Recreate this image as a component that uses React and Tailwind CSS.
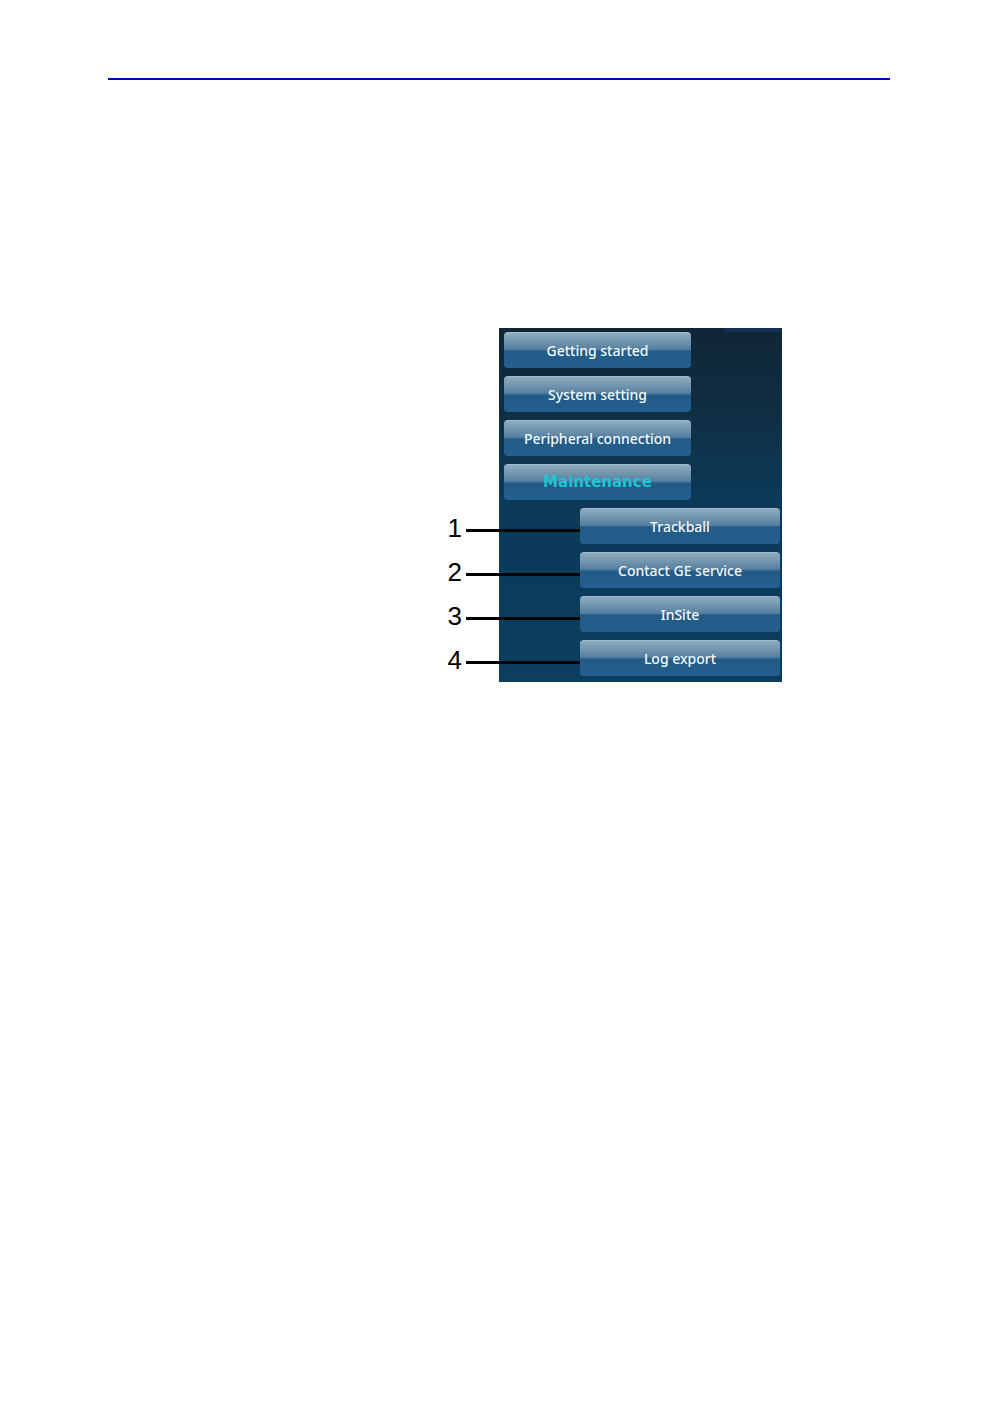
import React from "react";
import clsx from "clsx";

const sections = [
  { name: "Getting started" },
  { name: "System setting" },
  { name: "Peripheral connection" },
  { name: "Maintenance", active: true },
];

const maintenanceItems = ["Trackball", "Contact GE service", "InSite", "Log export"];

const MenuButton = ({ active, children }) => (
  <button
    type="button"
    className={clsx(
      "flex h-9 w-full items-center justify-center rounded border-t border-[#a0b9cb] whitespace-nowrap",
      "bg-[linear-gradient(to_bottom,#90acc0_0%,#56809f_46%,#235b85_52%,#235f8e_100%)]",
      active
        ? "font-['DejaVu_Sans',sans-serif] text-[15px] font-bold text-[#1cc5d2]"
        : "font-['Noto_Sans',sans-serif] text-sm font-medium text-[#f4f9fd]"
    )}
  >
    {children}
  </button>
);

// Number and leader line that point at a menu entry
const Callout = ({ number }) => (
  <div className="absolute right-full top-1 flex h-9 items-center gap-1">
    <span className="pb-1 font-['Liberation_Sans',sans-serif] text-[26px] leading-8 text-black">{number}</span>
    <span className="h-[3px] w-[114px] bg-black" />
  </div>
);

const App = () => {
  return (
    <div className="min-h-screen bg-white px-[108px] pt-[78px]">
      {/* Page rule */}
      <hr className="border-t-2 border-[#0000c8]" />

      {/* Menu figure */}
      <main className="flex pt-[248px] pl-[391px]">
        <nav
          aria-label="System menu"
          className="w-[283px] bg-[linear-gradient(to_bottom,#102636_0%,#102e43_22%,#0c3a59_50%,#0b3e5f_100%)]"
        >
          <div className="ml-auto h-1 w-[58px] bg-[#152e55]" />
          <ul className="flex flex-col gap-2 pr-[2px] pb-[6px] pl-[5px]">
            {sections.map((section) => (
              <li key={section.name} className="w-[187px]">
                <MenuButton active={section.active}>{section.name}</MenuButton>
              </li>
            ))}
            {maintenanceItems.map((item, idx) => (
              <li key={item} className="relative ml-[76px]">
                <Callout number={idx + 1} />
                <MenuButton>{item}</MenuButton>
              </li>
            ))}
          </ul>
        </nav>
      </main>
    </div>
  );
};

export default App;
